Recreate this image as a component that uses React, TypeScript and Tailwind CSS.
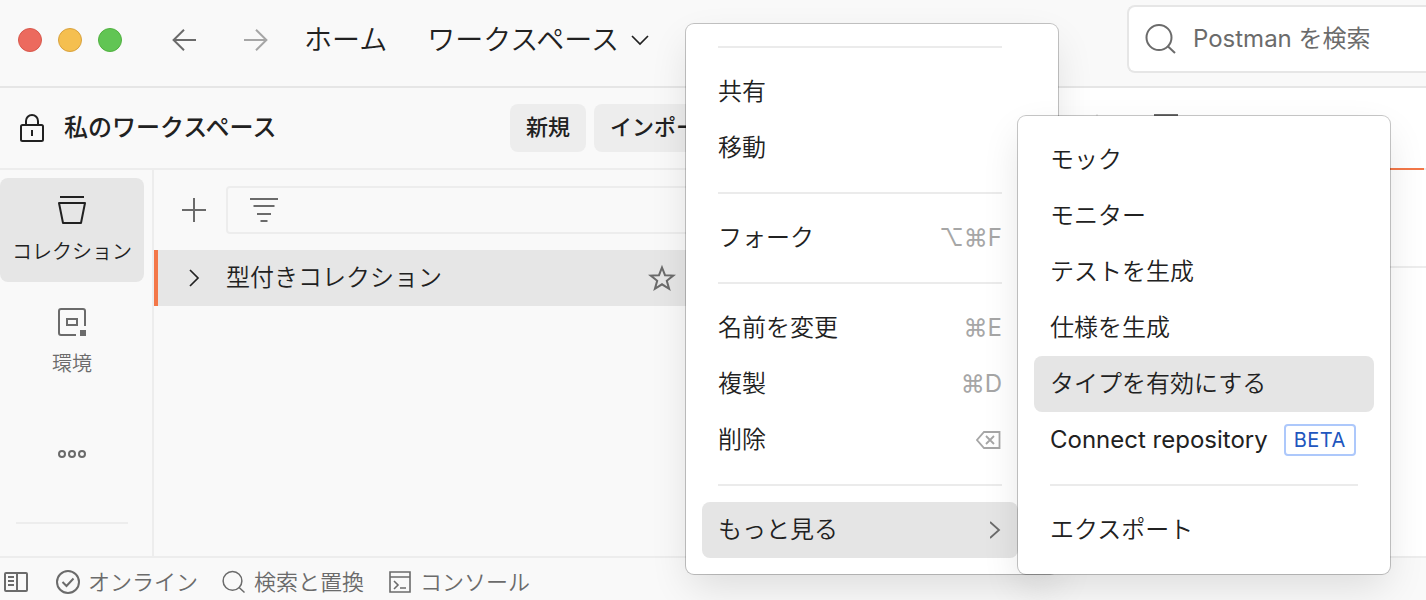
import type { ReactNode } from "react";

function Icon({ className, viewBox, children }: { className: string; viewBox: string; children: ReactNode }) {
  return (
    <svg className={className} viewBox={viewBox} fill="none" stroke="currentColor" strokeWidth="2" aria-hidden="true">
      {children}
    </svg>
  );
}

function SearchIcon({ className }: { className: string }) {
  return (
    <Icon className={className} viewBox="0 0 32 32">
      <circle cx="14" cy="14.5" r="12.5" />
      <path d="M22.500 23 30 30" />
    </Icon>
  );
}

function Separator() {
  return <div role="separator" className="mx-4 my-4 h-0.5 bg-[#ebebeb]" />;
}

type MenuItemProps = { label: string; shortcut?: ReactNode; active?: boolean; badge?: string };

function MenuItem({ label, shortcut, active, badge }: MenuItemProps) {
  return (
    <button
      role="menuitem"
      className={`flex h-14 w-full items-center rounded-lg px-4 text-left whitespace-nowrap ${active ? "bg-[#e5e5e5]" : ""} ${badge ? "font-normal" : ""}`}
    >
      <span>{label}</span>
      {badge && (
        <span className="ml-4 flex h-8 items-center rounded border-2 border-[#adc8fb] px-2 text-xl font-normal tracking-wide text-[#2156be]">
          {badge}
        </span>
      )}
      {shortcut && <span className="ml-auto font-normal text-[#a6a6a6]">{shortcut}</span>}
    </button>
  );
}

function RailItem({ label, active, children }: { label: string; active?: boolean; children: ReactNode }) {
  return (
    <button
      className={`flex h-26 w-full flex-col items-center gap-3 rounded-lg pt-4 text-xl leading-7 whitespace-nowrap ${
        active ? "bg-[#e6e6e6] text-[#212121]" : "text-[#6b6b6b]"
      }`}
    >
      {children}
      <span>{label}</span>
    </button>
  );
}

function TitleBar() {
  return (
    <header className="flex h-22 shrink-0 items-center border-b-2 border-[#e6e6e6] bg-[#f9f9f9] pb-1.5 pl-[18px]">
      <div className="flex shrink-0 gap-4">
        <span className="size-6 rounded-full border border-[#d8584c] bg-[#ec6a5e]" />
        <span className="size-6 rounded-full border border-[#d9a23e] bg-[#f5bf4f]" />
        <span className="size-6 rounded-full border border-[#50b13f] bg-[#61c554]" />
      </div>
      <button aria-label="戻る" className="ml-[50px] shrink-0 text-[#6b6b6b]">
        <Icon className="h-6 w-6" viewBox="0 0 24 24">
          <path d="M24 12H1.5M12 1.8 1.6 12 12 22.2" />
        </Icon>
      </button>
      <button aria-label="進む" className="ml-12 shrink-0 text-[#a6a6a6]">
        <Icon className="h-6 w-6" viewBox="0 0 24 24">
          <path d="M0 12h22.5M12 1.8 22.4 12 12 22.2" />
        </Icon>
      </button>
      <nav className="ml-9 flex shrink-0 items-center gap-10 text-[28px] leading-10">
        <a href="#home">ホーム</a>
        <button className="flex items-center gap-3">
          <span>ワークスペース</span>
          <Icon className="h-3 w-[18px]" viewBox="0 0 18 12">
            <path d="M1 2l8 8 8-8" strokeWidth="1.7" />
          </Icon>
        </button>
      </nav>
      <label className="mb-0.5 ml-auto flex h-17 w-[299px] shrink-0 items-center gap-4 rounded-l-lg border-2 border-r-0 border-[#e6e6e6] bg-white pl-4 text-[#6b6b6b]">
        <SearchIcon className="size-8 shrink-0" />
        <input
          type="search"
          aria-label="Postman を検索"
          placeholder="Postman を検索"
          className="w-full min-w-0 bg-transparent font-normal outline-none placeholder:text-[#6b6b6b]"
        />
      </label>
    </header>
  );
}

function WorkspaceBar() {
  return (
    <div className="flex h-[82px] shrink-0 items-center border-b-2 border-[#ededed] pr-4 pl-5">
      <Icon className="h-7 w-6 shrink-0" viewBox="0 0 24 28">
        <rect x="1" y="11" width="22" height="16" rx="1.5" />
        <path d="M6 11V7a6 6 0 0 1 12 0v4M12 16v6" />
      </Icon>
      <h1 className="ml-5 text-2xl font-medium">私のワークスペース</h1>
      <div className="ml-auto flex gap-2 text-[22px] font-medium">
        <button className="h-12 rounded-lg bg-[#ededed] px-4">新規</button>
        <button className="h-12 rounded-lg bg-[#ededed] px-4">インポート</button>
      </div>
    </div>
  );
}

function Rail() {
  return (
    <nav className="flex w-[154px] shrink-0 flex-col gap-2 border-r-2 border-[#ededed] pt-2 pr-2">
      <RailItem label="コレクション" active>
        <Icon className="size-8 shrink-0" viewBox="0 0 32 32">
          <path d="M4 3h24M3 9h26l-4 20H7z" strokeLinejoin="round" />
        </Icon>
      </RailItem>
      <RailItem label="環境">
        <Icon className="size-8 shrink-0" viewBox="0 0 32 32">
          <path d="M20 29H5a2 2 0 0 1-2-2V5a2 2 0 0 1 2-2h22a2 2 0 0 1 2 2v15" />
          <rect x="11" y="13" width="10" height="6" />
          <path d="M24 24h6v6h-6z" fill="currentColor" stroke="none" />
        </Icon>
      </RailItem>
      <button aria-label="その他" className="flex h-26 items-center justify-center text-[#6b6b6b]">
        <Icon className="h-2 w-7" viewBox="0 0 28 8">
          <circle cx="4" cy="4" r="3" />
          <circle cx="14" cy="4" r="3" />
          <circle cx="24" cy="4" r="3" />
        </Icon>
      </button>
      <div className="mx-4 mt-2 h-0.5 shrink-0 bg-[#ededed]" />
    </nav>
  );
}

function CollectionPanel() {
  return (
    <section className="min-w-0 flex-1">
      <div className="flex h-20 items-center gap-5 pr-4 pl-7">
        <button aria-label="追加" className="text-[#6b6b6b]">
          <Icon className="size-6" viewBox="0 0 24 24">
            <path d="M12 0v24M0 12h24" />
          </Icon>
        </button>
        <label className="flex h-12 flex-1 items-center gap-4 rounded border-2 border-[#ededed] pl-[22px] text-[#6b6b6b]">
          <Icon className="h-6 w-7 shrink-0" viewBox="0 0 28 24">
            <path d="M0 1h28M3.500 8h21M7 16h14M10.500 23h7" />
          </Icon>
          <input aria-label="コレクションを絞り込む" className="w-full min-w-0 bg-transparent outline-none" />
        </label>
      </div>
      <div className="flex h-14 items-center border-l-4 border-[#f37748] bg-[#e6e6e6] pr-19 pl-[30px]">
        <button aria-label="展開">
          <Icon className="h-[18px] w-3" viewBox="0 0 12 18">
            <path d="M2 1l8 8-8 8" strokeWidth="1.7" />
          </Icon>
        </button>
        <span className="ml-[26px]">型付きコレクション</span>
        <button aria-label="お気に入り" className="ml-auto text-[#6b6b6b]">
          <Icon className="size-7" viewBox="0 0 28 28">
            <path d="M14 3.500l3 7.700 8.300.4-6.500 5.200 2.300 8L14 20.300l-7.100 4.500 2.300-8-6.500-5.200 8.300-.4z" />
          </Icon>
        </button>
      </div>
    </section>
  );
}

function EditorArea() {
  return (
    <main className="flex min-w-0 flex-1 flex-col bg-white">
      <div className="flex h-[82px] shrink-0 items-center border-b-2 border-[#ededed]">
        <div className="h-7 w-[344px] shrink-0 border-r-2 border-[#ededed]" />
        <div className="-mb-0.5 flex h-[82px] flex-1 items-center border-b-2 border-[#f37748] pl-14">
          <Icon className="h-7 w-6 text-[#6b6b6b]" viewBox="0 0 24 28">
            <path d="M1 1h22v26H1z" />
          </Icon>
        </div>
        <div className="w-0.5 shrink-0" />
      </div>
      <div className="h-[98px] shrink-0 border-b-2 border-[#ededed]" />
    </main>
  );
}

function StatusBar() {
  return (
    <footer className="flex h-11 shrink-0 items-center border-t-2 border-[#ededed] bg-[#f9f9f9] pt-1.5 pl-1 text-[22px] leading-8 text-[#6b6b6b]">
      <button aria-label="サイドバー">
        <Icon className="h-5 w-6" viewBox="0 0 24 20">
          <rect x="1" y="1" width="22" height="18" rx="1" />
          <path d="M13 1v18M4 5h6M4 9h6M4 13h6" />
        </Icon>
      </button>
      <button className="ml-7 flex items-center gap-2">
        <Icon className="size-6" viewBox="0 0 24 24">
          <circle cx="12" cy="12" r="11" />
          <path d="M6.500 12l4 4 7-7.500" />
        </Icon>
        <span>オンライン</span>
      </button>
      <button className="ml-6 flex items-center gap-2">
        <SearchIcon className="size-6" />
        <span>検索と置換</span>
      </button>
      <button className="ml-6 flex items-center gap-2">
        <Icon className="size-6" viewBox="0 0 24 24">
          <path d="M2 2h20v20H2zM2 7h20M6 11l4 4-4 4M12 18h6" strokeWidth="1.6" />
        </Icon>
        <span>コンソール</span>
      </button>
    </footer>
  );
}

export default function App() {
  return (
    <div
      lang="ja"
      className="relative flex h-screen flex-col overflow-hidden bg-[#f9f9f9] font-['Inter','Noto_Sans_CJK_JP',sans-serif] text-2xl font-[350] text-[#212121]"
    >
      <TitleBar />
      <div className="flex min-h-0 flex-1">
        <aside className="flex w-[754px] shrink-0 flex-col border-r-2 border-[#ededed]">
          <WorkspaceBar />
          <div className="flex min-h-0 flex-1">
            <Rail />
            <CollectionPanel />
          </div>
        </aside>
        <EditorArea />
      </div>
      <StatusBar />

      <div
        role="menu"
        className="absolute top-6 left-[686px] w-93 rounded-lg bg-white pt-1.5 pr-10 pb-4 pl-4 shadow-[0_0_0_1px_rgba(0,0,0,0.22),0_16px_40px_-4px_rgba(0,0,0,0.12)]"
      >
        <Separator />
        <MenuItem label="共有" />
        <MenuItem label="移動" />
        <Separator />
        <MenuItem label="フォーク" shortcut="⌥⌘F" />
        <Separator />
        <MenuItem label="名前を変更" shortcut="⌘E" />
        <MenuItem label="複製" shortcut="⌘D" />
        <MenuItem
          label="削除"
          shortcut={
            <Icon className="h-5 w-[26px]" viewBox="0 0 26 20">
              <path d="M8 2h15.500v16H8L1 10zM10 6l8 8M18 6l-8 8" strokeWidth="1.800" />
            </Icon>
          }
        />
        <Separator />
        <MenuItem
          label="もっと見る"
          active
          shortcut={
            <Icon className="h-[18px] w-3 text-[#6b6b6b]" viewBox="0 0 12 18">
              <path d="M0 1l9 8-9 8" strokeWidth="1.800" />
            </Icon>
          }
        />
      </div>

      <div
        role="menu"
        className="absolute top-29 left-[1018px] w-93 rounded-lg bg-white p-4 shadow-[0_0_0_1px_rgba(0,0,0,0.22),0_16px_40px_-4px_rgba(0,0,0,0.12)]"
      >
        <MenuItem label="モック" />
        <MenuItem label="モニター" />
        <MenuItem label="テストを生成" />
        <MenuItem label="仕様を生成" />
        <MenuItem label="タイプを有効にする" active />
        <MenuItem label="Connect repository" badge="BETA" />
        <Separator />
        <MenuItem label="エクスポート" />
      </div>
    </div>
  );
}
